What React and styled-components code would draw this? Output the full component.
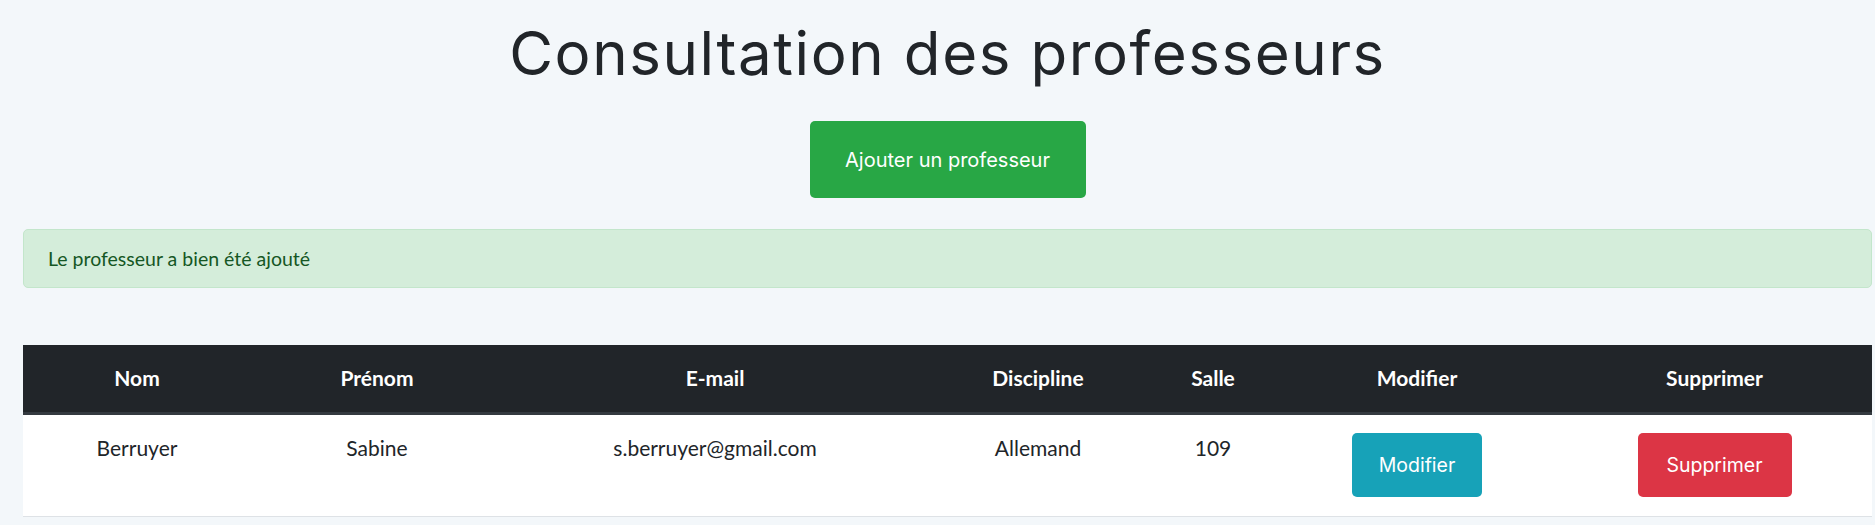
import React from "react";
import styled, { createGlobalStyle } from "styled-components";

const Global = createGlobalStyle`
  html, body { margin: 0; padding: 0; }
  body {
    background: #f3f7fa;
    font-family: "Lato", "Noto Sans", sans-serif;
    font-size: 20px;
    color: #212529;
  }
`;

const Page = styled.main`
  width: 1849px;
  margin-left: 23px;
  padding-top: 18px;
  display: flex;
  flex-direction: column;
  align-items: center;
`;

const Title = styled.h1`
  margin: 0;
  font-family: "Inter", "Noto Sans", sans-serif;
  font-weight: 400;
  font-size: 60px;
  line-height: 71px;
  color: #212529;
  letter-spacing: 1.6px;
`;

const Button = styled.button`
  font-family: "Inter", "Noto Sans", sans-serif;
  font-size: ${(p) => (p.$large ? "20px" : "19.5px")};
  line-height: 30px;
  color: #fff;
  background: ${(p) => p.$bg};
  border: none;
  border-radius: 5px;
  height: ${(p) => (p.$large ? "77px" : "64px")};
  width: ${(p) => p.$w}px;
  padding: 0;
  cursor: pointer;
`;

const AddButton = styled(Button)`
  margin-top: 32px;
`;

const Alert = styled.div`
  align-self: stretch;
  margin-top: 31px;
  box-sizing: border-box;
  height: 59px;
  padding: 0 24px;
  display: flex;
  align-items: center;
  background: #d4edda;
  border: 1px solid #c3e6cb;
  border-radius: 5px;
  color: #155724;
  font-size: 19.5px;
`;

const Table = styled.table`
  align-self: stretch;
  margin-top: 57px;
  border-collapse: collapse;
  table-layout: fixed;
  width: 1849px;
  background: #fff;
`;

const HeadCell = styled.th`
  background: #212529;
  color: #fff;
  font-weight: 700;
  font-size: 21px;
  line-height: 30px;
  padding: 18px 8px 19px;
  text-align: center;
  border-bottom: 3px solid #343a40;
`;

const Cell = styled.td`
  font-size: 21px;
  line-height: 30px;
  padding: 18px 8px 19px;
  text-align: center;
  vertical-align: top;
  color: #212529;
  border-bottom: 1px solid #dee2e6;
`;

const cols = [228, 252, 424, 222, 128, 280, 315];
const headers = ["Nom", "Prénom", "E-mail", "Discipline", "Salle", "Modifier", "Supprimer"];

export default function App() {
  return (
    <>
      <Global />
      <Page>
        <Title>Consultation des professeurs</Title>
        <AddButton $large $bg="#28a745" $w={276}>
          Ajouter un professeur
        </AddButton>
        <Alert>Le professeur a bien été ajouté</Alert>
        <Table>
          <colgroup>
            {cols.map((w, i) => (
              <col key={i} style={{ width: w }} />
            ))}
          </colgroup>
          <thead>
            <tr>
              {headers.map((h) => (
                <HeadCell key={h}>{h}</HeadCell>
              ))}
            </tr>
          </thead>
          <tbody>
            <tr>
              <Cell>Berruyer</Cell>
              <Cell>Sabine</Cell>
              <Cell>s.berruyer@gmail.com</Cell>
              <Cell>Allemand</Cell>
              <Cell>109</Cell>
              <Cell>
                <Button $bg="#17a2b8" $w={130}>Modifier</Button>
              </Cell>
              <Cell>
                <Button $bg="#dc3545" $w={154}>Supprimer</Button>
              </Cell>
            </tr>
          </tbody>
        </Table>
      </Page>
    </>
  );
}
